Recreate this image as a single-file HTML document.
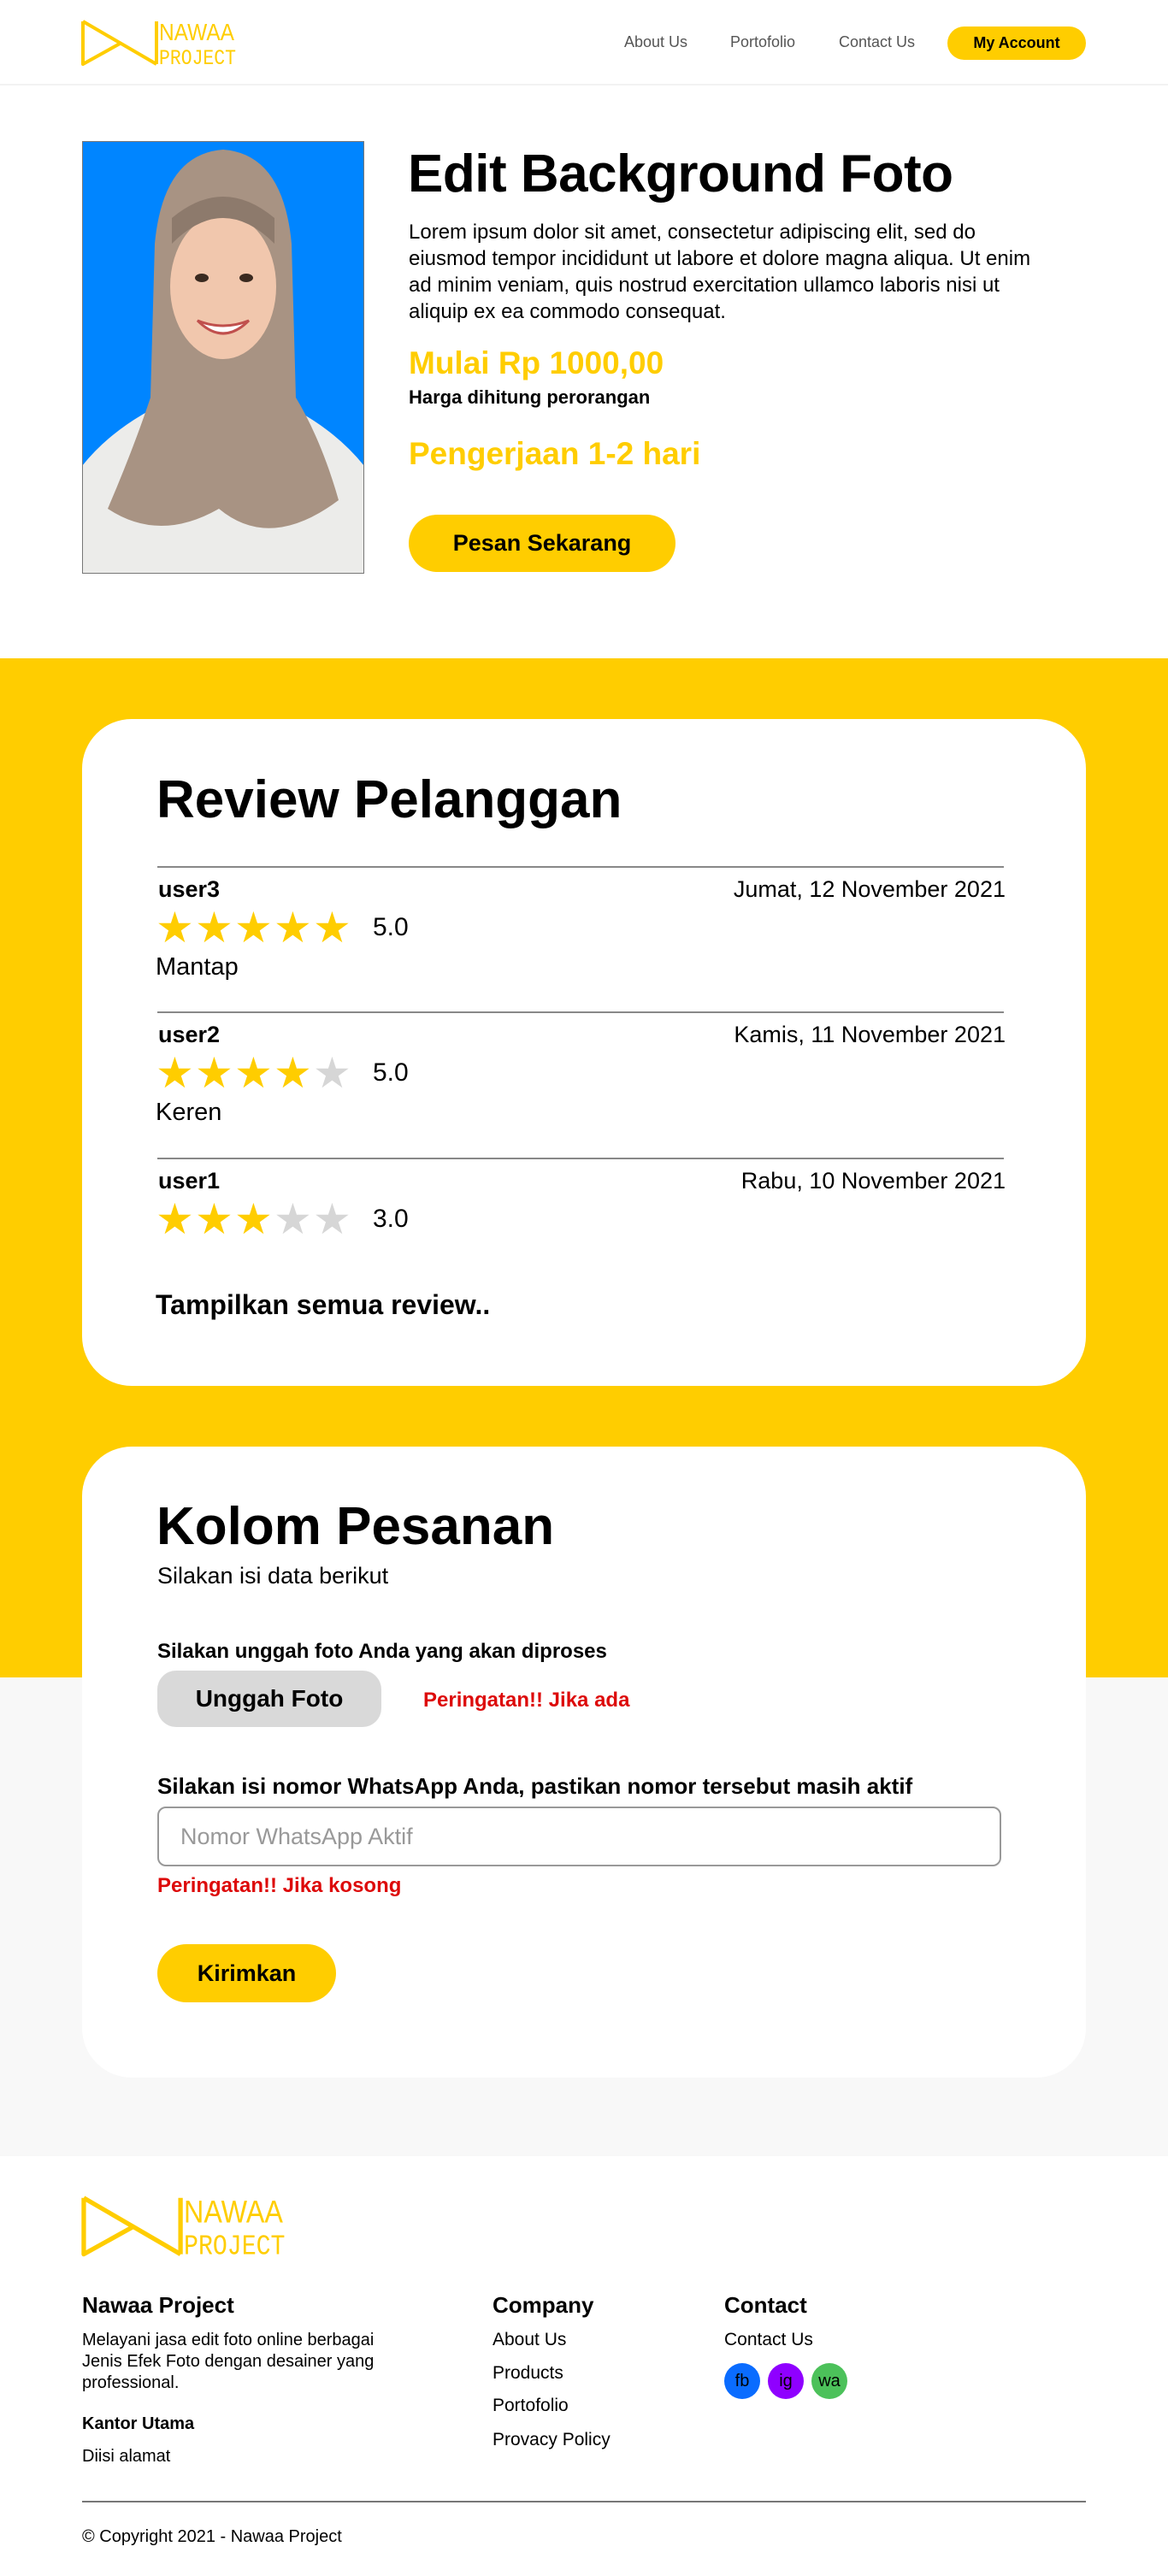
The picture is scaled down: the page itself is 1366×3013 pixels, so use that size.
<!DOCTYPE html>
<html><head><meta charset="utf-8">
<style>
*{margin:0;padding:0;box-sizing:border-box}
body{width:1366px;height:3013px;font-family:"Liberation Sans",sans-serif;color:#000;background:#fff;position:relative;overflow:hidden}
.a{position:absolute;white-space:nowrap}
.y{color:#ffcd00}
.btn{position:absolute;background:#ffcd00;border-radius:40px;display:flex;align-items:center;justify-content:center;font-weight:bold}
.star{position:absolute;font-size:50px;line-height:50px;color:#ffcd00}
.g{color:#d6d6d6}
</style></head><body>
<div class="a" style="left:0;top:0;width:1366px;height:100px;background:#fff;border-bottom:2px solid #f2f2f2"></div>
<svg class="a" style="left:94px;top:22px" width="190" height="58" viewBox="0 0 190 58">
<path d="M3 3 L3 53 L48 28 M3 3 L89 53 M89 3 L89 53" stroke="#ffcd00" stroke-width="4" fill="none" stroke-linejoin="round"/>
<text x="92" y="25" font-family="Liberation Sans Narrow,Liberation Sans,sans-serif" font-size="28" fill="#ffcd00" textLength="88" lengthAdjust="spacingAndGlyphs">NAWAA</text>
<text x="92" y="53" font-family="Liberation Mono,monospace" font-size="25" fill="#ffcd00" textLength="90" lengthAdjust="spacingAndGlyphs">PROJECT</text>
</svg>
<div class="a" style="left:730px;top:39px;font-size:18px;color:#555">About Us</div>
<div class="a" style="left:854px;top:39px;font-size:18px;color:#555">Portofolio</div>
<div class="a" style="left:981px;top:39px;font-size:18px;color:#555">Contact Us</div>
<div class="btn" style="left:1108px;top:31px;width:162px;height:39px;font-size:18px">My Account</div>

<svg class="a" style="left:96px;top:165px" width="330" height="506" viewBox="0 0 330 506">
<rect width="330" height="506" fill="#0085ff"/>
<path d="M0 380 Q40 330 110 300 L220 300 Q290 330 330 380 L330 506 L0 506Z" fill="#ececea"/>
<path d="M85 120 Q95 15 165 10 Q235 15 245 120 L250 300 Q280 350 300 420 Q220 480 160 430 Q90 470 30 430 Q60 360 80 300Z" fill="#a89383"/>
<ellipse cx="165" cy="170" rx="62" ry="85" fill="#f1c7ad"/>
<path d="M105 120 Q165 60 225 120 L225 90 Q165 40 105 90Z" fill="#8d7a6c"/>
<ellipse cx="140" cy="160" rx="8" ry="5" fill="#3a2a20"/><ellipse cx="192" cy="160" rx="8" ry="5" fill="#3a2a20"/>
<path d="M135 210 Q165 240 195 210 Q165 222 135 210Z" fill="#fff" stroke="#c0504d" stroke-width="3"/>
<rect x="0" y="0" width="330" height="506" fill="none" stroke="#777" stroke-width="2"/>
</svg>
<div class="a" style="left:477px;top:168px;font-size:62px;font-weight:bold;letter-spacing:-0.5px">Edit Background Foto</div>
<div class="a" style="left:478px;top:256px;width:735px;white-space:normal;font-size:24px;line-height:31px">Lorem ipsum dolor sit amet, consectetur adipiscing elit, sed do eiusmod tempor incididunt ut labore et dolore magna aliqua. Ut enim ad minim veniam, quis nostrud exercitation ullamco laboris nisi ut aliquip ex ea commodo consequat.</div>
<div class="a y" style="left:478px;top:404px;font-size:37px;font-weight:bold">Mulai Rp 1000,00</div>
<div class="a" style="left:478px;top:452px;font-size:22px;font-weight:bold">Harga dihitung perorangan</div>
<div class="a y" style="left:478px;top:510px;font-size:37px;font-weight:bold">Pengerjaan 1-2 hari</div>
<div class="btn" style="left:478px;top:602px;width:312px;height:67px;font-size:27px">Pesan Sekarang</div>

<div class="a" style="left:0;top:770px;width:1366px;height:1192px;background:#ffcd00"></div>
<div class="a" style="left:0;top:1962px;width:1366px;height:560px;background:#f8f8f8"></div>

<div class="a" style="left:96px;top:841px;width:1174px;height:780px;background:#fff;border-radius:58px"></div>
<div class="a" style="left:183px;top:900px;font-size:62px;font-weight:bold">Review Pelanggan</div>

<div class="a" style="left:184px;top:1013px;width:990px;height:2px;background:#888"></div>
<div class="a" style="left:185px;top:1025px;font-size:27px;font-weight:bold">user3</div>
<div class="a" style="right:190px;top:1025px;font-size:27px">Jumat, 12 November 2021</div>
<div class="star" style="left:182px;top:1060px">★</div><div class="star" style="left:228px;top:1060px">★</div><div class="star" style="left:274px;top:1060px">★</div><div class="star" style="left:320px;top:1060px">★</div><div class="star" style="left:366px;top:1060px">★</div>
<div class="a" style="left:436px;top:1068px;font-size:30px">5.0</div>
<div class="a" style="left:182px;top:1115px;font-size:29px">Mantap</div>

<div class="a" style="left:184px;top:1183px;width:990px;height:2px;background:#888"></div>
<div class="a" style="left:185px;top:1195px;font-size:27px;font-weight:bold">user2</div>
<div class="a" style="right:190px;top:1195px;font-size:27px">Kamis, 11 November 2021</div>
<div class="star" style="left:182px;top:1230px">★</div><div class="star" style="left:228px;top:1230px">★</div><div class="star" style="left:274px;top:1230px">★</div><div class="star" style="left:320px;top:1230px">★</div><div class="star g" style="left:366px;top:1230px">★</div>
<div class="a" style="left:436px;top:1238px;font-size:30px">5.0</div>
<div class="a" style="left:182px;top:1285px;font-size:29px">Keren</div>

<div class="a" style="left:184px;top:1354px;width:990px;height:2px;background:#888"></div>
<div class="a" style="left:185px;top:1366px;font-size:27px;font-weight:bold">user1</div>
<div class="a" style="right:190px;top:1366px;font-size:27px">Rabu, 10 November 2021</div>
<div class="star" style="left:182px;top:1401px">★</div><div class="star" style="left:228px;top:1401px">★</div><div class="star" style="left:274px;top:1401px">★</div><div class="star g" style="left:320px;top:1401px">★</div><div class="star g" style="left:366px;top:1401px">★</div>
<div class="a" style="left:436px;top:1409px;font-size:30px">3.0</div>
<div class="a" style="left:182px;top:1508px;font-size:32px;font-weight:bold">Tampilkan semua review..</div>

<div class="a" style="left:96px;top:1692px;width:1174px;height:738px;background:#fff;border-radius:58px"></div>
<div class="a" style="left:183px;top:1750px;font-size:62px;font-weight:bold">Kolom Pesanan</div>
<div class="a" style="left:184px;top:1828px;font-size:27px">Silakan isi data berikut</div>
<div class="a" style="left:184px;top:1918px;font-size:24px;font-weight:bold">Silakan unggah foto Anda yang akan diproses</div>
<div class="a" style="left:184px;top:1954px;width:262px;height:66px;background:#d9d9d9;border-radius:22px;display:flex;align-items:center;justify-content:center;font-size:28px;font-weight:bold">Unggah Foto</div>
<div class="a" style="left:495px;top:1975px;font-size:24px;font-weight:bold;color:#dd0a0a">Peringatan!! Jika ada</div>
<div class="a" style="left:184px;top:2074px;font-size:26px;font-weight:bold">Silakan isi nomor WhatsApp Anda, pastikan nomor tersebut masih aktif</div>
<div class="a" style="left:184px;top:2113px;width:987px;height:70px;border:2px solid #999;border-radius:10px;font-size:27px;color:#999;padding:18px 0 0 25px">Nomor WhatsApp Aktif</div>
<div class="a" style="left:184px;top:2192px;font-size:24px;font-weight:bold;color:#dd0a0a">Peringatan!! Jika kosong</div>
<div class="btn" style="left:184px;top:2274px;width:209px;height:68px;font-size:27px">Kirimkan</div>

<svg class="a" style="left:94px;top:2566px" width="250" height="78" viewBox="0 0 190 58">
<path d="M3 3 L3 53 L48 28 M3 3 L89 53 M89 3 L89 53" stroke="#ffcd00" stroke-width="4" fill="none" stroke-linejoin="round"/>
<text x="92" y="25" font-family="Liberation Sans Narrow,Liberation Sans,sans-serif" font-size="28" fill="#ffcd00" textLength="88" lengthAdjust="spacingAndGlyphs">NAWAA</text>
<text x="92" y="53" font-family="Liberation Mono,monospace" font-size="25" fill="#ffcd00" textLength="90" lengthAdjust="spacingAndGlyphs">PROJECT</text>
</svg>
<div class="a" style="left:96px;top:2681px;font-size:26px;font-weight:bold">Nawaa Project</div>
<div class="a" style="left:576px;top:2681px;font-size:26px;font-weight:bold">Company</div>
<div class="a" style="left:847px;top:2681px;font-size:26px;font-weight:bold">Contact</div>
<div class="a" style="left:96px;top:2725px;width:365px;white-space:normal;font-size:20px;line-height:25px">Melayani jasa edit foto online berbagai Jenis Efek Foto dengan desainer yang professional.</div>
<div class="a" style="left:96px;top:2824px;font-size:20px;font-weight:bold">Kantor Utama</div>
<div class="a" style="left:96px;top:2862px;font-size:20px">Diisi alamat</div>
<div class="a" style="left:576px;top:2725px;font-size:21px">About Us</div>
<div class="a" style="left:576px;top:2764px;font-size:21px">Products</div>
<div class="a" style="left:576px;top:2802px;font-size:21px">Portofolio</div>
<div class="a" style="left:576px;top:2842px;font-size:21px">Provacy Policy</div>
<div class="a" style="left:847px;top:2725px;font-size:21px">Contact Us</div>
<div class="a" style="left:847px;top:2764px;width:42px;height:42px;border-radius:50%;background:#0a6cff;font-size:20px;display:flex;align-items:center;justify-content:center">fb</div>
<div class="a" style="left:898px;top:2764px;width:42px;height:42px;border-radius:50%;background:#8f00ff;font-size:20px;display:flex;align-items:center;justify-content:center">ig</div>
<div class="a" style="left:949px;top:2764px;width:42px;height:42px;border-radius:50%;background:#4cc15a;font-size:20px;display:flex;align-items:center;justify-content:center">wa</div>
<div class="a" style="left:96px;top:2925px;width:1174px;height:2px;background:#777"></div>
<div class="a" style="left:96px;top:2956px;font-size:20px">© Copyright 2021 - Nawaa Project</div>
</body></html>
